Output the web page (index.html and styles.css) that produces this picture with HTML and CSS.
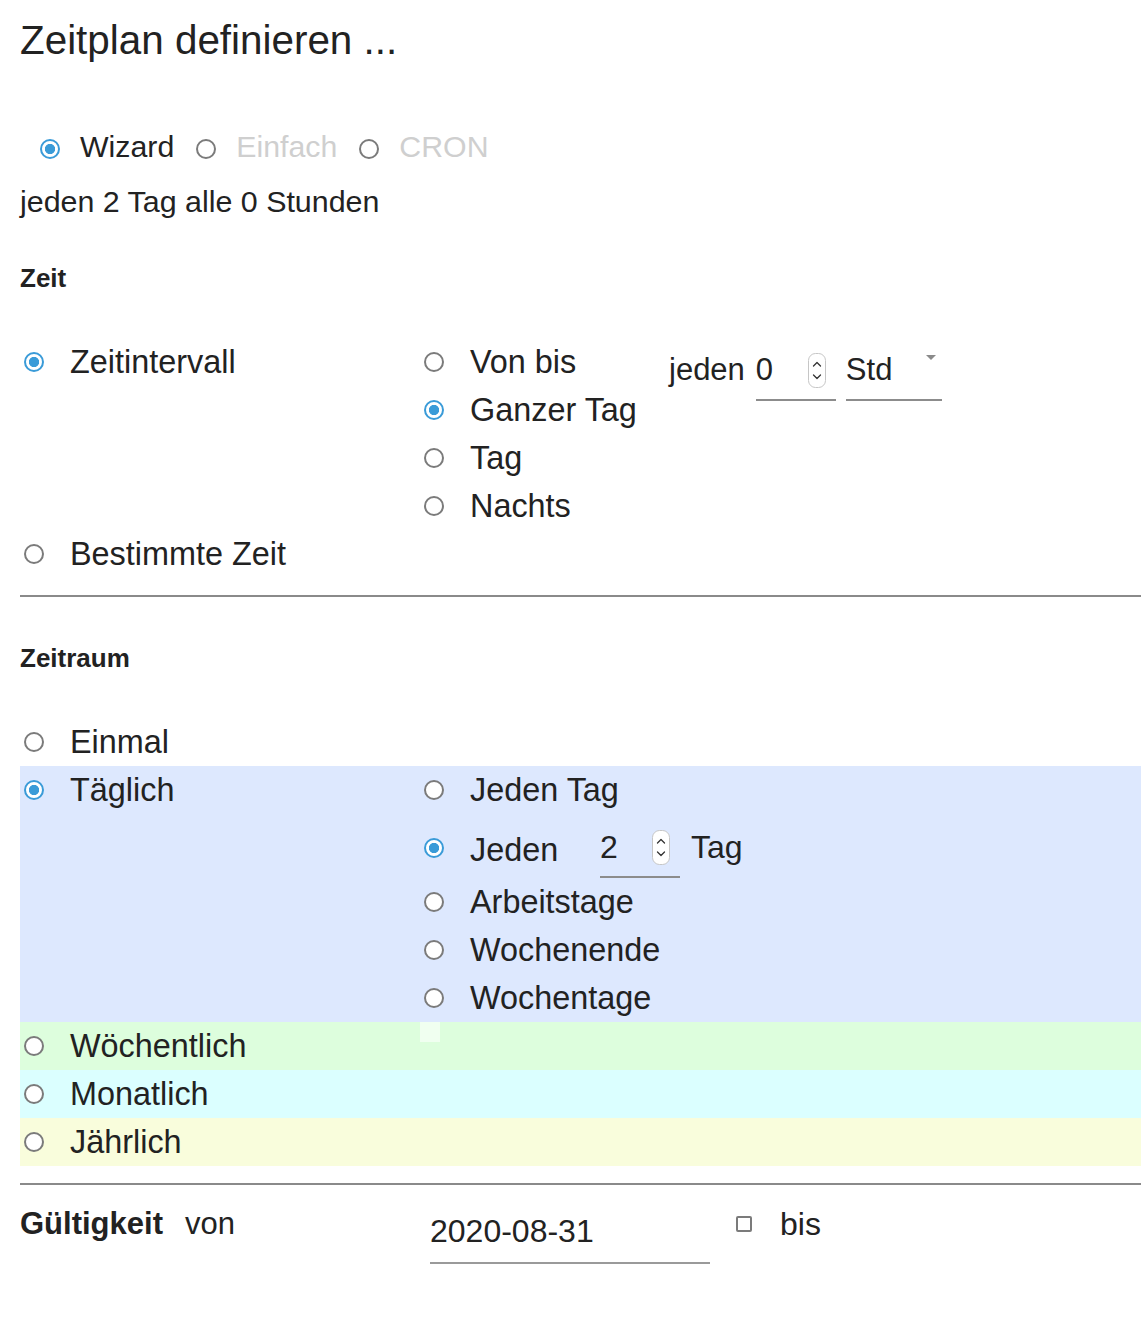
FILE: index.html
```html
<!DOCTYPE html>
<html lang="de">
<head>
<meta charset="utf-8">
<title>Zeitplan definieren</title>
<link rel="stylesheet" href="styles.css">
</head>
<body>
<div class="page">
  <h1 class="title">Zeitplan definieren ...</h1>

  <div class="mode">
    <span class="radio checked"></span><span class="mode-label">Wizard</span>
    <span class="radio"></span><span class="mode-label disabled">Einfach</span>
    <span class="radio"></span><span class="mode-label disabled">CRON</span>
  </div>
  <p class="summary">jeden 2 Tag alle 0 Stunden</p>

  <h2 class="section-title">Zeit</h2>
  <div class="opt-row">
    <div class="opt-main"><span class="radio checked"></span><span class="opt-label">Zeitintervall</span></div>
    <div class="sub-list">
      <div class="sub-item"><span class="radio"></span><span class="opt-label">Von bis</span></div>
      <div class="sub-item"><span class="radio checked"></span><span class="opt-label">Ganzer Tag</span></div>
      <div class="sub-item"><span class="radio"></span><span class="opt-label">Tag</span></div>
      <div class="sub-item"><span class="radio"></span><span class="opt-label">Nachts</span></div>
    </div>
    <div class="interval">
      <span class="interval-label">jeden</span>
      <span class="field num-field">
        <span class="field-value">0</span>
        <span class="spinner"><svg width="18" height="35" viewBox="0 0 18 35"><rect x="0.5" y="0.5" width="17" height="34" rx="7" fill="#fff" stroke="#c6c6c6"/><path d="M5.5 13 L9 9.5 L12.5 13" fill="none" stroke="#333" stroke-width="1.3" stroke-linecap="round" stroke-linejoin="round"/><path d="M5.5 22 L9 25.5 L12.5 22" fill="none" stroke="#333" stroke-width="1.3" stroke-linecap="round" stroke-linejoin="round"/></svg></span>
      </span>
      <span class="field select-field">
        <span class="field-value">Std</span>
        <span class="caret"></span>
      </span>
    </div>
  </div>
  <div class="opt-row">
    <div class="opt-main"><span class="radio"></span><span class="opt-label">Bestimmte Zeit</span></div>
  </div>

  <hr class="divider">

  <h2 class="section-title">Zeitraum</h2>
  <div class="opt-row">
    <div class="opt-main"><span class="radio"></span><span class="opt-label">Einmal</span></div>
  </div>
  <div class="opt-row daily">
    <div class="opt-main"><span class="radio checked"></span><span class="opt-label">Täglich</span></div>
    <div class="sub-list">
      <div class="sub-item"><span class="radio"></span><span class="opt-label">Jeden Tag</span></div>
      <div class="sub-item every-n">
        <span class="radio checked"></span>
        <span class="opt-label every-label">Jeden</span>
        <span class="field day-field">
          <span class="field-value">2</span>
          <span class="spinner"><svg width="18" height="35" viewBox="0 0 18 35"><rect x="0.5" y="0.5" width="17" height="34" rx="7" fill="#fff" stroke="#c6c6c6"/><path d="M5.5 13 L9 9.5 L12.5 13" fill="none" stroke="#333" stroke-width="1.3" stroke-linecap="round" stroke-linejoin="round"/><path d="M5.5 22 L9 25.5 L12.5 22" fill="none" stroke="#333" stroke-width="1.3" stroke-linecap="round" stroke-linejoin="round"/></svg></span>
        </span>
        <span class="unit-label">Tag</span>
      </div>
      <div class="sub-item"><span class="radio"></span><span class="opt-label">Arbeitstage</span></div>
      <div class="sub-item"><span class="radio"></span><span class="opt-label">Wochenende</span></div>
      <div class="sub-item"><span class="radio"></span><span class="opt-label">Wochentage</span></div>
    </div>
  </div>
  <div class="opt-row weekly">
    <div class="opt-main"><span class="radio"></span><span class="opt-label">Wöchentlich</span></div>
    <span class="ghost"></span>
  </div>
  <div class="opt-row monthly">
    <div class="opt-main"><span class="radio"></span><span class="opt-label">Monatlich</span></div>
  </div>
  <div class="opt-row yearly">
    <div class="opt-main"><span class="radio"></span><span class="opt-label">Jährlich</span></div>
  </div>

  <hr class="divider">

  <div class="validity">
    <div class="validity-head">
      <span class="validity-title">Gültigkeit</span>
      <span class="validity-von">von</span>
    </div>
    <span class="field date-field"><span class="field-value">2020-08-31</span></span>
    <span class="checkbox"></span>
    <span class="bis-label">bis</span>
  </div>
</div>
</body>
</html>
```

FILE: styles.css
```css
html, body {
  margin: 0;
  padding: 0;
  background: #fff;
}

body {
  font-family: "Liberation Sans", Arial, Helvetica, sans-serif;
  color: #222;
}

.page {
  padding: 16px 0 60px 20px;
}

.title {
  margin: 0;
  font-size: 40.4px;
  line-height: 48px;
  font-weight: normal;
  color: #222;
}

/* mode selector */
.mode {
  margin: 63px 0 0 20px;
  display: flex;
  align-items: center;
  height: 40px;
}

.mode .radio {
  margin-top: 4px;
}

.mode-label {
  font-size: 30.3px;
  line-height: 40px;
  margin-left: 20px;
  margin-right: 22px;
}

.mode-label.disabled {
  color: #cfcfcf;
}

.summary {
  margin: 14px 0 0;
  font-size: 30.4px;
  line-height: 40px;
}

.section-title {
  margin: 41px 0 44px;
  font-size: 26px;
  line-height: 32px;
  font-weight: bold;
  color: #222;
}

.divider + .section-title {
  margin-top: 45px;
}

/* radios */
.radio {
  box-sizing: border-box;
  display: inline-block;
  flex-shrink: 0;
  width: 20px;
  height: 20px;
  border: 2px solid #7b7b7b;
  border-radius: 50%;
  background: #fff;
}

.radio.checked {
  border-color: #3a9bd8;
  background: radial-gradient(circle closest-side, #3a9bd8 0, #3a9bd8 60%, #fff 68%);
}

/* option rows */
.opt-row {
  display: flex;
  align-items: flex-start;
}

.opt-main {
  flex-shrink: 0;
  width: 404px;
  height: 48px;
  display: flex;
  align-items: center;
}

.opt-main .radio {
  margin-left: 4px;
}

.opt-label {
  margin-left: 26px;
  font-size: 32.4px;
  line-height: 48px;
  white-space: nowrap;
}

.sub-list {
  width: 245px;
  flex-shrink: 0;
  display: flex;
  flex-direction: column;
}

.sub-item {
  height: 48px;
  display: flex;
  align-items: center;
}

.sub-item > * {
  flex-shrink: 0;
}

/* interval controls */
.interval {
  padding-top: 8px;
  display: flex;
  align-items: flex-start;
  font-size: 31px;
  line-height: 40px;
}

.interval-label {
  padding-top: 4px;
  margin-right: 11px;
}

.field {
  box-sizing: border-box;
  display: flex;
  align-items: center;
  flex-shrink: 0;
  border-bottom: 2px solid #8c8c8c;
}

.field-value {
  flex: 1;
  white-space: nowrap;
}

.spinner {
  display: flex;
  flex-shrink: 0;
  width: 18px;
  height: 35px;
}

.num-field {
  width: 80px;
  margin-right: 10px;
  padding: 4px 10px 9px 0;
}

.select-field {
  width: 96px;
  padding: 4px 6px 9px 0;
}

.caret {
  align-self: flex-start;
  margin-top: 5px;
  width: 0;
  height: 0;
  border-left: 5px solid transparent;
  border-right: 5px solid transparent;
  border-top: 5px solid #8a8a8a;
}

/* Zeitraum */
.daily {
  background: #dde8fe;
}

.weekly {
  background: #ddfedd;
}

.monthly {
  background: #dbffff;
}

.yearly {
  background: #f9fddc;
}

.ghost {
  width: 20px;
  height: 20px;
  margin-left: -4px;
  background: rgba(255, 255, 255, 0.55);
}

.sub-item.every-n {
  height: 64px;
  align-items: flex-start;
}

.every-n .radio {
  margin-top: 24px;
}

.every-label {
  box-sizing: border-box;
  width: 130px;
  padding-top: 16px;
  line-height: 40px;
}

.day-field {
  width: 80px;
  padding: 13px 10px 9px 0;
  font-size: 32px;
  line-height: 40px;
}

.unit-label {
  margin-left: 11px;
  padding-top: 13px;
  font-size: 32px;
  line-height: 40px;
}

.divider {
  margin: 17px 0 0;
  height: 0;
  border: 0;
  border-top: 2px solid #8a8a8a;
}

/* validity */
.validity {
  margin-top: 19px;
  display: flex;
  align-items: flex-start;
}

.validity-head {
  width: 410px;
  flex-shrink: 0;
  display: flex;
  font-size: 31px;
  line-height: 40px;
}

.validity-title {
  font-weight: bold;
}

.validity-von {
  margin-left: 22px;
}

.date-field {
  width: 280px;
  margin-top: 7px;
  padding-bottom: 11px;
  font-size: 32px;
  line-height: 40px;
  border-bottom-color: #9a9a9a;
}

.checkbox {
  box-sizing: border-box;
  width: 16px;
  height: 16px;
  margin: 12px 0 0 26px;
  border: 2px solid #7b7b7b;
  border-radius: 2px;
  background: #fff;
}

.bis-label {
  margin-left: 28px;
  font-size: 32px;
  line-height: 40px;
}
```
